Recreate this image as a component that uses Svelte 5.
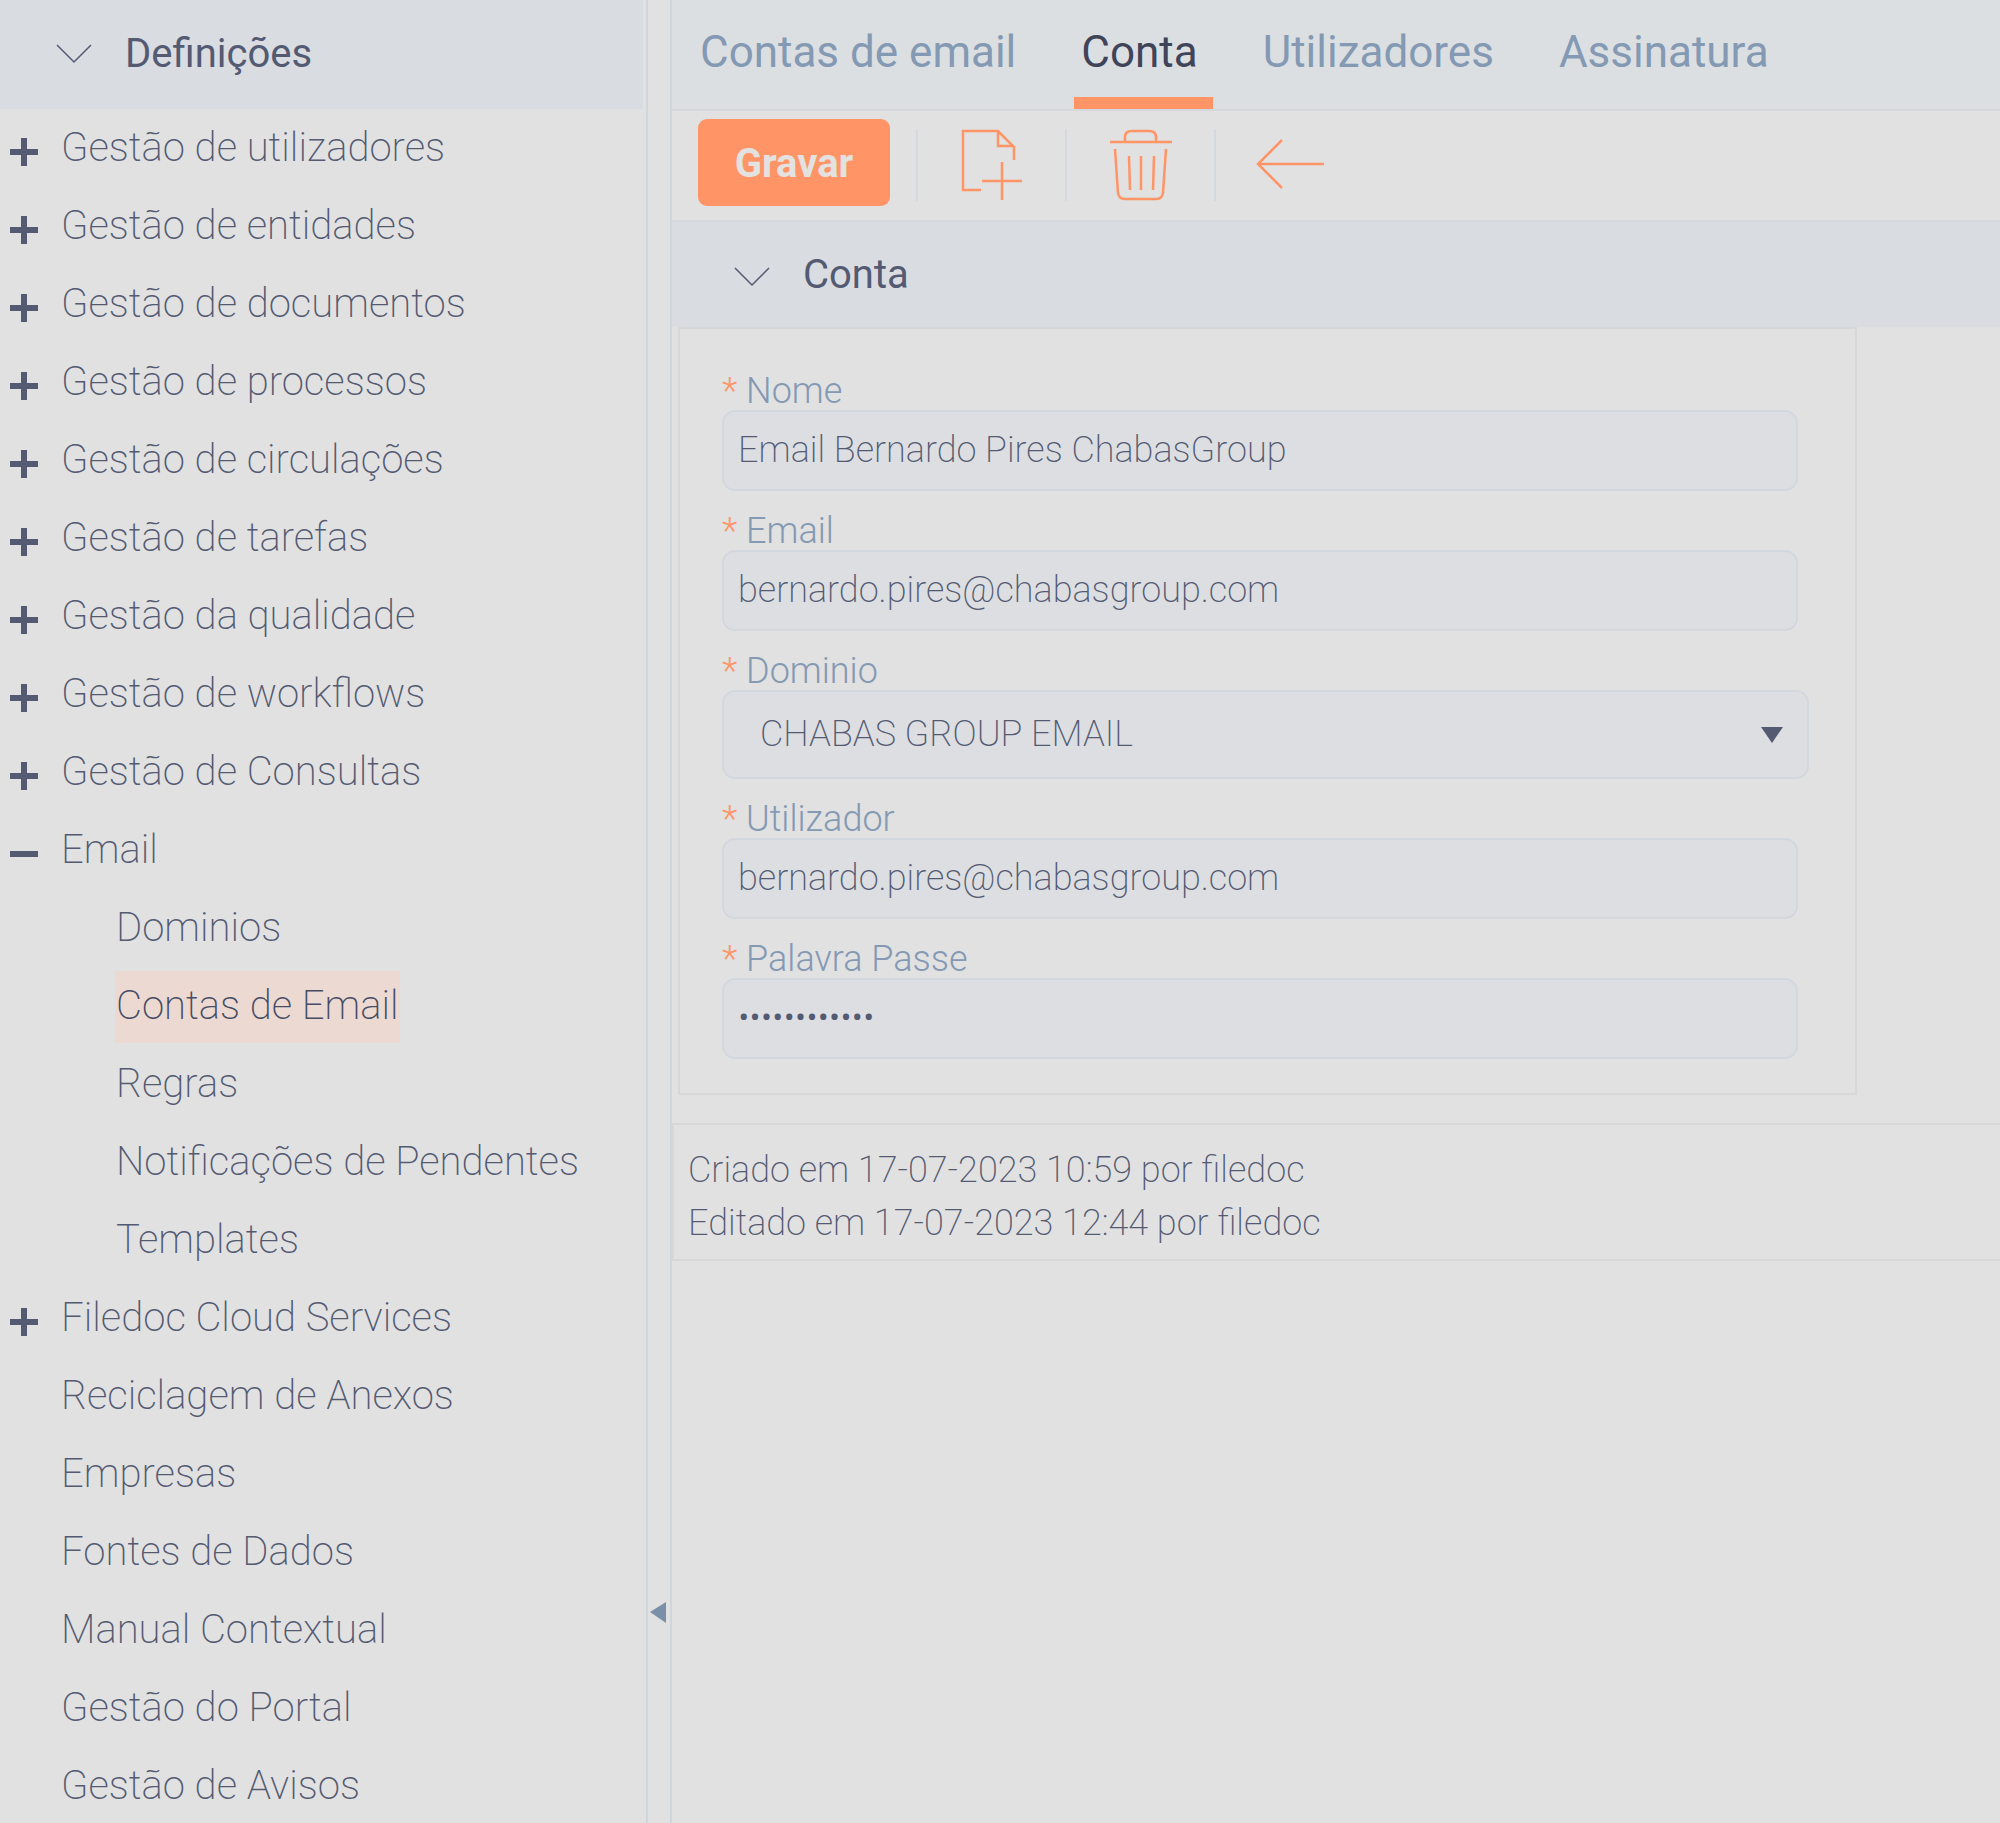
<script lang="ts">
  type Item = { label: string; state?: 'closed' | 'open'; children?: string[] }

  const menu: Item[] = [
    { label: 'Gestão de utilizadores', state: 'closed' },
    { label: 'Gestão de entidades', state: 'closed' },
    { label: 'Gestão de documentos', state: 'closed' },
    { label: 'Gestão de processos', state: 'closed' },
    { label: 'Gestão de circulações', state: 'closed' },
    { label: 'Gestão de tarefas', state: 'closed' },
    { label: 'Gestão da qualidade', state: 'closed' },
    { label: 'Gestão de workflows', state: 'closed' },
    { label: 'Gestão de Consultas', state: 'closed' },
    {
      label: 'Email',
      state: 'open',
      children: ['Dominios', 'Contas de Email', 'Regras', 'Notificações de Pendentes', 'Templates'],
    },
    { label: 'Filedoc Cloud Services', state: 'closed' },
    { label: 'Reciclagem de Anexos' },
    { label: 'Empresas' },
    { label: 'Fontes de Dados' },
    { label: 'Manual Contextual' },
    { label: 'Gestão do Portal' },
    { label: 'Gestão de Avisos' },
  ]

  const tabs = ['Contas de email', 'Conta', 'Utilizadores', 'Assinatura']

  let selected = $state('Contas de Email')
  let activeTab = $state('Conta')

  let nome = $state('Email Bernardo Pires ChabasGroup')
  let email = $state('bernardo.pires@chabasgroup.com')
  let dominio = $state('CHABAS GROUP EMAIL')
  let utilizador = $state('bernardo.pires@chabasgroup.com')
  let palavraPasse = $state('abcdefghijkl')
</script>

{#snippet chevron()}
  <svg class="chevron" viewBox="0 0 36 20" aria-hidden="true">
    <path d="M1 1 L18 18 L35 1" />
  </svg>
{/snippet}

{#snippet label(id: string, text: string)}
  <label for={id}><span class="required">*</span> {text}</label>
{/snippet}

<div class="layout">
  <aside class="sidebar">
    <button class="sidebar-head" type="button">
      {@render chevron()}
      <span>Definições</span>
    </button>
    <ul class="tree">
      {#each menu as item}
        <li>
          <div class="row">
            {#if item.state}
              <button class="toggle" type="button" aria-label={item.label} aria-expanded={item.state === 'open'}>
                <svg viewBox="0 0 28 28" aria-hidden="true">
                  <path d="M0 14 H28" />
                  {#if item.state === 'closed'}<path d="M14 0 V28" />{/if}
                </svg>
              </button>
            {/if}
            <a class="link" href="#menu">{item.label}</a>
          </div>
          {#if item.children}
            <ul class="children">
              {#each item.children as child}
                <li class="row">
                  <a
                    class="link"
                    class:selected={child === selected}
                    href="#menu"
                    onclick={() => (selected = child)}>{child}</a>
                </li>
              {/each}
            </ul>
          {/if}
        </li>
      {/each}
    </ul>
  </aside>

  <div class="splitter">
    <button type="button" aria-label="Recolher menu">
      <svg viewBox="0 0 16 21" aria-hidden="true"><path d="M16 0 V21 L0 10 Z" /></svg>
    </button>
  </div>

  <main>
    <nav class="tabs">
      {#each tabs as tab}
        <a class="tab" class:active={tab === activeTab} href="#tab" onclick={() => (activeTab = tab)}>{tab}</a>
      {/each}
    </nav>

    <div class="toolbar">
      <button class="save" type="button">Gravar</button>
      <button class="tool" type="button" aria-label="Novo">
        <svg viewBox="0 0 68 72" aria-hidden="true">
          <path d="M23 61 H5 V2 H40 L56 18 V31 M40 2 V17 H56 M44 33 V71 M24 52 H64" />
        </svg>
      </button>
      <button class="tool" type="button" aria-label="Eliminar">
        <svg viewBox="0 0 68 72" aria-hidden="true">
          <path d="M3 13 H65 M18 12 V8 Q18 2 25 2 H42 Q49 2 49 8 V12 M8 20 L11 64 Q12 70 18 70 H49 Q55 70 56 64 L59 20 M22 27 L23 61 M34 27 V61 M47 27 L46 61" />
        </svg>
      </button>
      <button class="tool" type="button" aria-label="Voltar">
        <svg viewBox="0 0 68 72" aria-hidden="true">
          <path d="M68 35 H2 M26 11 L2 35 L26 59" />
        </svg>
      </button>
    </div>

    <button class="section-head" type="button">
      {@render chevron()}
      <span>Conta</span>
    </button>

    <form class="panel">
      <div class="field">
        {@render label('nome', 'Nome')}
        <input id="nome" type="text" bind:value={nome} />
      </div>
      <div class="field">
        {@render label('email', 'Email')}
        <input id="email" type="text" bind:value={email} />
      </div>
      <div class="field">
        {@render label('dominio', 'Dominio')}
        <div class="select">
          <select id="dominio" bind:value={dominio}>
            <option>CHABAS GROUP EMAIL</option>
          </select>
          <svg viewBox="0 0 22 16" aria-hidden="true"><path d="M0 0 H22 L11 16 Z" /></svg>
        </div>
      </div>
      <div class="field">
        {@render label('utilizador', 'Utilizador')}
        <input id="utilizador" type="text" bind:value={utilizador} />
      </div>
      <div class="field">
        {@render label('palavra-passe', 'Palavra Passe')}
        <input id="palavra-passe" type="password" autocomplete="off" bind:value={palavraPasse} />
      </div>
    </form>

    <div class="history">
      <div>Criado em 17-07-2023 10:59 por filedoc</div>
      <div>Editado em 17-07-2023 12:44 por filedoc</div>
    </div>
  </main>
</div>

<style>
  :global(body) {
    background: #e1e1e1;
  }

  .layout {
    --ink: #535a72;
    --muted: #8499b3;
    --accent: #ff9466;
    --line: #d5d8dc;
    --line-2: #d6d7d9;
    --bar: #d9dce1;
    display: grid;
    grid-template-columns: 648px 24px minmax(0, 1fr);
    min-height: 100vh;
    background: #e1e1e1;
    color: var(--ink);
    font-family: Roboto, 'Open Sans', sans-serif;
    font-weight: 200;
  }

  button {
    margin: 0;
    padding: 0;
    border: 0;
    background: none;
    color: inherit;
    font: inherit;
    cursor: pointer;
  }

  a {
    color: inherit;
    text-decoration: none;
  }

  ul {
    list-style: none;
    margin: 0;
    padding: 0;
  }

  svg {
    display: block;
    flex-shrink: 0;
  }

  .chevron {
    width: 36px;
    height: 20px;
    fill: none;
    stroke: var(--ink);
    stroke-width: 1.5;
  }

  .sidebar {
    border-right: 2px solid #d1d6da;
  }

  .sidebar-head,
  .section-head {
    display: flex;
    align-items: center;
    gap: 33px;
    background: var(--bar);
    font-size: 40px;
    font-weight: 400;
  }

  .sidebar-head {
    width: calc(100% - 3px);
    height: 109px;
    padding: 0 56px 2px;
  }

  .tree {
    padding-top: 4px;
  }

  .row {
    display: flex;
    align-items: flex-start;
    height: 72px;
    margin-bottom: 6px;
    padding-left: 60px;
  }

  .tree > li:last-child .row {
    margin-bottom: 0;
  }

  .children .row {
    padding-left: 115px;
  }

  .toggle {
    width: 28px;
    height: 28px;
    margin: 25px 22px 0 -50px;
  }

  .toggle svg {
    width: 28px;
    height: 28px;
    fill: none;
    stroke: var(--ink);
    stroke-width: 6;
  }

  .link {
    padding: 0 1px 2px;
    font-size: 40px;
    line-height: 70px;
    white-space: nowrap;
  }

  .link.selected {
    background: #ecd9d2;
    color: #464c64;
  }

  .splitter {
    display: flex;
    flex-direction: column;
    justify-content: flex-end;
    align-items: flex-start;
    padding: 0 2px 200px;
    border-right: 2px solid #d1d6da;
  }

  .splitter svg {
    width: 16px;
    height: 21px;
    fill: #7b8fa9;
  }

  .tabs {
    display: flex;
    gap: 43px;
    padding-left: 21px;
    background: #dbdfe1;
    border-bottom: 2px solid var(--line);
    color: var(--muted);
    font-size: 44px;
    font-weight: 400;
  }

  .tab {
    padding: 4px 15px 0 7px;
    height: 93px;
    line-height: 96px;
    border-bottom: 12px solid transparent;
    white-space: nowrap;
  }

  .tab.active {
    color: #3f4459;
    border-bottom-color: var(--accent);
  }

  .toolbar {
    box-sizing: border-box;
    display: flex;
    align-items: center;
    height: 111px;
    padding: 0 0 2px 26px;
    border-bottom: 2px solid var(--line);
  }

  .save {
    width: 192px;
    height: 87px;
    margin: 0 26px 5px 0;
    padding-top: 2px;
    border-radius: 9px;
    background: var(--accent);
    color: #e4e2e0;
    font-size: 40px;
    font-weight: 700;
  }

  .tool {
    display: flex;
    justify-content: center;
    width: 149px;
    border-left: 2px solid #d3d9de;
  }

  .tool svg {
    width: 68px;
    height: 72px;
    fill: none;
    stroke: var(--accent);
    stroke-width: 2.5;
  }

  .section-head {
    width: 100%;
    height: 105px;
    padding: 0 62px;
  }

  .section-head .chevron {
    margin-top: 4px;
  }

  .panel {
    box-sizing: border-box;
    display: flex;
    flex-direction: column;
    max-width: 1179px;
    margin-left: 6px;
    padding: 22px 57px 34px 42px;
    border: 2px solid var(--line-2);
  }

  .field {
    display: flex;
    flex-direction: column;
  }

  label {
    height: 51px;
    padding-top: 8px;
    color: var(--muted);
    font-size: 36px;
    font-weight: 300;
    line-height: 64px;
    white-space: pre;
  }

  .required {
    color: var(--accent);
  }

  input,
  select {
    box-sizing: border-box;
    width: 100%;
    margin: 0;
    border: 2px solid #d3d7de;
    border-radius: 13px;
    background: #dcdee2;
    color: var(--ink);
    font: 200 36px Roboto, 'Open Sans', sans-serif;
    outline: none;
  }

  input {
    height: 81px;
    padding: 0 14px 1px;
  }

  .select {
    display: flex;
    align-items: center;
    width: calc(100% + 11px);
  }

  select {
    appearance: none;
    height: 89px;
    padding: 0 36px 2px;
  }

  .select svg {
    width: 22px;
    height: 16px;
    margin-left: -48px;
    fill: var(--ink);
    pointer-events: none;
  }

  .history {
    margin-top: 28px;
    padding: 19px 14px 9px;
    border: 2px solid var(--line-2);
    border-right: 0;
    font-size: 36px;
    line-height: 53px;
  }
</style>
